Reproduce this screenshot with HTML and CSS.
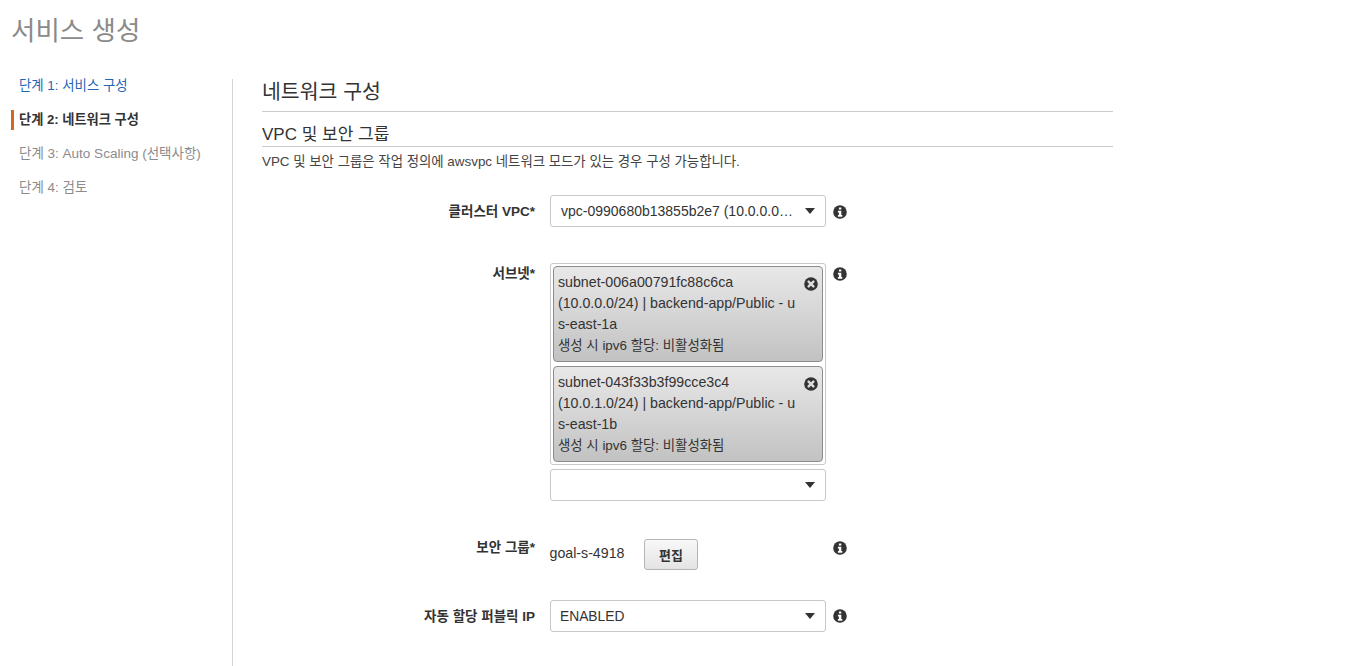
FILE: index.html
```html
<!DOCTYPE html>
<html lang="ko">
<head>
    <meta charset="UTF-8">
    <title>서비스 생성</title>
    <link rel="stylesheet" href="styles.css">
</head>
<body>
    <svg class="icon-defs" width="0" height="0">
        <symbol id="info" viewBox="0 0 14 14">
            <circle cx="7" cy="7" r="6.8" fill="#333"/>
            <rect x="5.9" y="2.4" width="2.4" height="2.2" rx="0.4" fill="#fff"/>
            <path d="M4.9 5.8h3.4v4.3h1v1.6H4.9v-1.6h1V7.4h-1z" fill="#fff"/>
        </symbol>
        <symbol id="remove" viewBox="0 0 14 14">
            <circle cx="7" cy="7" r="6.8" fill="#333"/>
            <path d="M4.6 4.6l4.8 4.8M9.4 4.6l-4.8 4.8" stroke="#ddd" stroke-width="2.4" stroke-linecap="round"/>
        </symbol>
    </svg>

    <h1 class="page-title">서비스 생성</h1>

    <div class="wizard">
        <nav class="steps">
            <a class="step step-done">단계 1: 서비스 구성</a>
            <a class="step step-current">단계 2: 네트워크 구성</a>
            <a class="step">단계 3: Auto Scaling (선택사항)</a>
            <a class="step">단계 4: 검토</a>
        </nav>

        <main class="content">
            <h2 class="section-title">네트워크 구성</h2>
            <h3 class="sub-title">VPC 및 보안 그룹</h3>
            <p class="sub-desc">VPC 및 보안 그룹은 작업 정의에 awsvpc 네트워크 모드가 있는 경우 구성 가능합니다.</p>

            <div class="form-row row-vpc">
                <label class="form-label">클러스터 VPC*</label>
                <div class="form-control">
                    <div class="select">
                        <span class="select-value">vpc-0990680b13855b2e7 (10.0.0.0…</span>
                        <span class="caret"></span>
                    </div>
                </div>
                <svg class="info"><use href="#info"/></svg>
            </div>

            <div class="form-row row-subnet">
                <label class="form-label">서브넷*</label>
                <div class="form-control">
                    <div class="token-box">
                        <div class="token">
                            <svg class="token-remove"><use href="#remove"/></svg>
                            subnet-006a00791fc88c6ca<br>
                            (10.0.0.0/24) | backend-app/Public - u<br>
                            s-east-1a<br>
                            <span class="token-note">생성 시 ipv6 할당: 비활성화됨</span>
                        </div>
                        <div class="token">
                            <svg class="token-remove"><use href="#remove"/></svg>
                            subnet-043f33b3f99cce3c4<br>
                            (10.0.1.0/24) | backend-app/Public - u<br>
                            s-east-1b<br>
                            <span class="token-note">생성 시 ipv6 할당: 비활성화됨</span>
                        </div>
                    </div>
                    <div class="select">
                        <span class="select-value"></span>
                        <span class="caret"></span>
                    </div>
                </div>
                <svg class="info"><use href="#info"/></svg>
            </div>

            <div class="form-row row-group">
                <label class="form-label">보안 그룹*</label>
                <div class="form-control group-control">
                    <span class="group-name">goal-s-4918</span>
                    <button class="btn">편집</button>
                </div>
                <svg class="info"><use href="#info"/></svg>
            </div>

            <div class="form-row row-ip">
                <label class="form-label">자동 할당 퍼블릭 IP</label>
                <div class="form-control">
                    <div class="select">
                        <span class="select-value select-caps">ENABLED</span>
                        <span class="caret"></span>
                    </div>
                </div>
                <svg class="info"><use href="#info"/></svg>
            </div>
        </main>
    </div>
</body>
</html>
```

FILE: styles.css
```css
html, body {
    height: 100%;
}

body {
    margin: 0;
    font-family: "Liberation Sans", "Noto Sans CJK KR", sans-serif;
    font-size: 14px;
    color: #333;
    background: #fff;
    overflow: hidden;
}

.icon-defs {
    display: block;
}

.page-title {
    margin: 0;
    padding: 15px 0 0 11px;
    height: 65px;
    box-sizing: border-box;
    font-size: 26.5px;
    line-height: 32px;
    font-weight: 400;
    color: #8a8a8a;
}

.wizard {
    display: flex;
    margin-top: 14px;
    height: 587px;
}

.steps {
    width: 233px;
    box-sizing: border-box;
    border-right: 1px solid #d5d5d5;
    flex: none;
    padding-left: 11px;
}

.step {
    display: block;
    height: 20px;
    margin-bottom: 14px;
    padding-left: 5px;
    border-left: 3px solid transparent;
    line-height: 20px;
    font-size: 13.5px;
    color: #8c8c8c;
}

.step-done {
    color: #1f66b5;
    margin-top: -3px;
    font-size: 13.4px;
}

.step-current {
    border-left-color: #d2691f;
    font-weight: 700;
    font-size: 13.2px;
    color: #333;
}

.content {
    margin-left: 29px;
    width: 851px;
}

.section-title {
    margin: 0;
    height: 31px;
    padding-top: 1px;
    border-bottom: 1px solid #ccc;
    font-size: 20.5px;
    line-height: 24px;
    font-weight: 400;
    color: #333;
}

.sub-title {
    margin: 0;
    height: 35px;
    padding-top: 12px;
    box-sizing: border-box;
    border-bottom: 1px solid #ccc;
    font-size: 17px;
    line-height: 21px;
    font-weight: 400;
    color: #333;
}

.sub-desc {
    margin: 0;
    padding-top: 6px;
    height: 48px;
    box-sizing: border-box;
    font-size: 13.4px;
    line-height: 18px;
    color: #444;
}

.form-row {
    display: grid;
    grid-template-columns: 273px 276px 36px;
    column-gap: 15px;
    align-items: start;
}

.form-row .info {
    margin-left: -8px;
}

.row-vpc {
    margin-bottom: 36px;
}

.row-subnet {
    margin-bottom: 38px;
}

.row-group {
    margin-bottom: 30px;
}

.form-label {
    padding-top: 8px;
    text-align: right;
    font-size: 13.5px;
    line-height: 18px;
    font-weight: 700;
    color: #333;
}

.row-subnet .form-label {
    padding-top: 2px;
}

.row-group .form-label {
    padding-top: 0;
}

.select {
    display: flex;
    align-items: center;
    justify-content: space-between;
    height: 32px;
    box-sizing: border-box;
    padding: 0 10px;
    border: 1px solid #c8c8c8;
    border-radius: 3px;
    background: #fff;
    font-size: 14px;
}

.select-value {
    white-space: nowrap;
}

.select-caps {
    margin-left: -1px;
    font-size: 13.8px;
}

.caret {
    width: 0;
    height: 0;
    border-left: 5.5px solid transparent;
    border-right: 5.5px solid transparent;
    border-top: 6px solid #333;
}

.info {
    width: 14px;
    height: 14px;
    margin-top: 10px;
}

.row-subnet .info {
    margin-top: 4px;
}

.row-group .info {
    margin-top: 2px;
}

.row-ip .info {
    margin-top: 9px;
}

.token-box {
    height: 202px;
    box-sizing: border-box;
    margin-bottom: 4px;
    padding: 2px;
    border: 1px solid #c8c8c8;
    border-radius: 3px;
}

.token {
    position: relative;
    height: 96px;
    box-sizing: border-box;
    margin-bottom: 4px;
    padding: 5px 4px 0;
    border: 1px solid #8c8c8c;
    border-radius: 4px;
    background: linear-gradient(#e8e8e8, #c2c2c2);
    font-size: 14.2px;
    line-height: 21px;
    color: #333;
}

.token-note {
    font-size: 13.4px;
}

.token-remove {
    position: absolute;
    top: 10px;
    right: 4px;
    width: 14px;
    height: 14px;
}

.group-control {
    display: flex;
    align-items: flex-start;
}

.group-name {
    margin-left: -0.5px;
    margin-top: 4px;
    font-size: 14.2px;
    line-height: 20px;
}

.btn {
    width: 54px;
    height: 31px;
    margin-left: 19.5px;
    border: 1px solid #b5b5b5;
    border-radius: 3px;
    background: linear-gradient(#f8f8f8, #e4e4e4);
    font-family: inherit;
    font-size: 13px;
    font-weight: 700;
    color: #333;
}
```
